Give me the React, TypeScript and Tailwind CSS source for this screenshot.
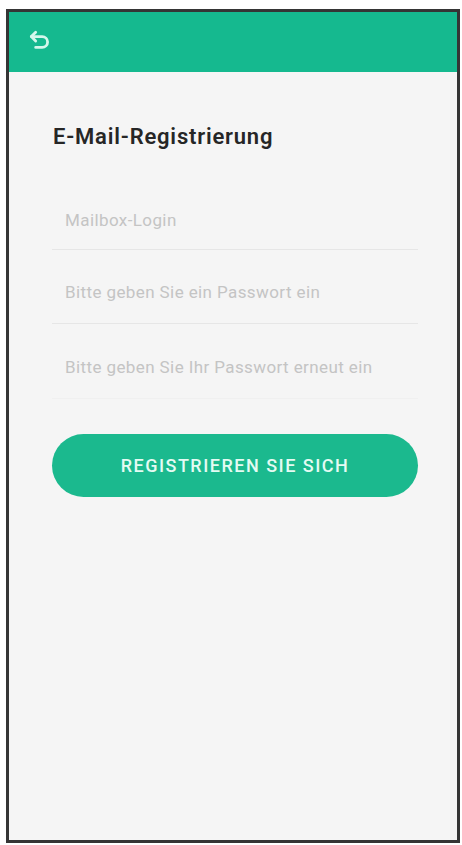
import React, { useState } from 'react';

const BackIcon: React.FC = () => (
    <svg width="28" height="26" viewBox="0 0 24 24" fill="none" stroke="currentColor" strokeWidth="2.6" strokeLinecap="round" strokeLinejoin="round">
        <path d="M8 11 4 7l4-4" />
        <path d="M4 7h10a5 5 0 0 1 0 10H8" />
    </svg>
);

const App: React.FC = () => {
    const [mail, setMail] = useState('');
    const [password, setPassword] = useState('');
    const [repeat, setRepeat] = useState('');

    const rows = [
        { placeholder: 'Mailbox-Login', value: mail, set: setMail, type: 'text', pt: 'pt-[32px]', pb: 'pb-[17px]', line: 'border-[#e6e6e6]' },
        { placeholder: 'Bitte geben Sie ein Passwort ein', value: password, set: setPassword, type: 'password', pt: 'pt-[32px]', pb: 'pb-[19px]', line: 'border-[#e6e6e6]' },
        { placeholder: 'Bitte geben Sie Ihr Passwort erneut ein', value: repeat, set: setRepeat, type: 'password', pt: 'pt-[33px]', pb: 'pb-[19px]', line: 'border-[#f0f0f0]' },
    ];

    return (
        <div className="w-[462px] h-[845px] bg-white pl-[6px] pt-[9px] pr-[2px] pb-[2px] font-['Roboto','Noto_Sans',sans-serif]">
            <div className="h-full flex flex-col border-[3px] border-[#353535] bg-[#f5f5f5]">
                <div className="h-[60px] shrink-0 bg-[#15b98f] flex items-center pl-[17px]">
                    <button className="text-[#d4f7ec]">
                        <BackIcon />
                    </button>
                </div>

                <div className="pl-[43px] pr-[39px]">
                    <h1 className="mt-[51px] pl-[1px] text-[22px] leading-[28px] font-semibold tracking-[0.8px] text-[#262626]">E-Mail-Registrierung</h1>

                    <form className="mt-[27px]" onSubmit={e => e.preventDefault()}>
                        {rows.map(r => (
                            <div key={r.placeholder} className={`${r.pt} ${r.pb} border-b ${r.line}`}>
                                <input
                                    type={r.type}
                                    value={r.value}
                                    onChange={e => r.set(e.target.value)}
                                    placeholder={r.placeholder}
                                    className="block w-full pl-[13px] h-[22px] bg-transparent text-[17px] tracking-[0.4px] text-[#333] placeholder:text-[#c4c4c4] outline-none"
                                />
                            </div>
                        ))}

                        <button type="submit" className="mt-[35px] w-full h-[63px] rounded-full bg-[#1bb98e] text-[#e4fbf3] text-[18px] font-medium tracking-[1.5px]">
                            REGISTRIEREN SIE SICH
                        </button>
                    </form>
                </div>
            </div>
        </div>
    );
};

export default App;
